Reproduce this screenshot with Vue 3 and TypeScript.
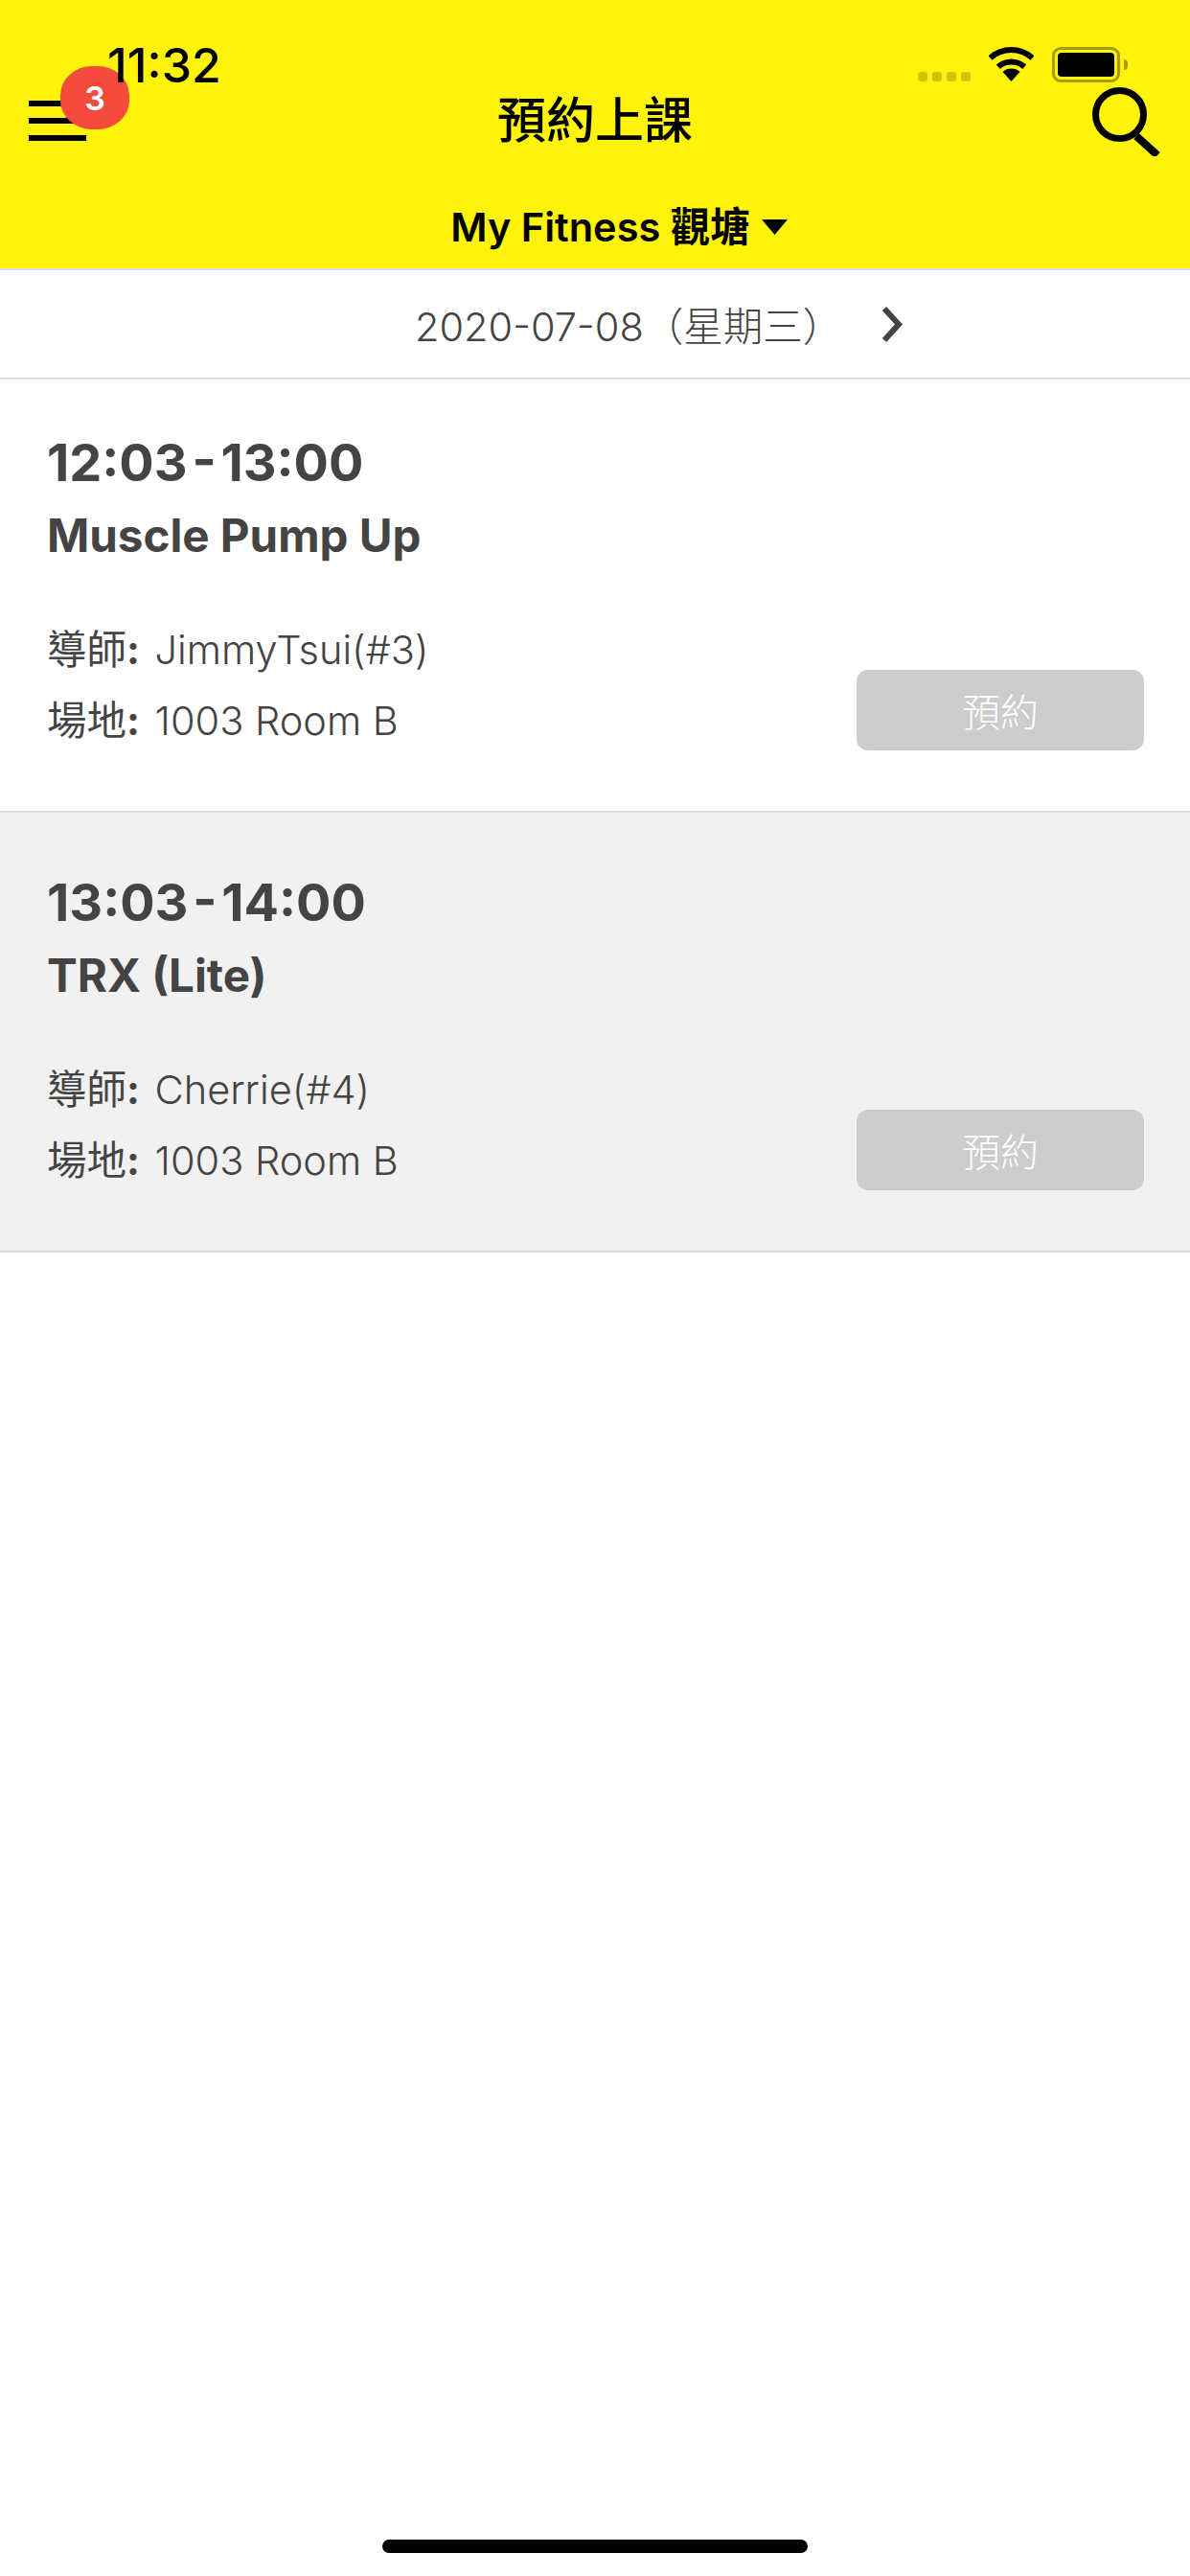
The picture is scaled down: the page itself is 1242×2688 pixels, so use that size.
<script setup lang="ts">
interface Lesson { time: string; name: string; coach: string; room: string; shaded: boolean }
const lessons: Lesson[] = [
  { time: '12:03 - 13:00', name: 'Muscle Pump Up', coach: 'JimmyTsui(#3)', room: '1003 Room B', shaded: false },
  { time: '13:03 - 14:00', name: 'TRX (Lite)', coach: 'Cherrie(#4)', room: '1003 Room B', shaded: true },
]
</script>

<template>
  <div class="page">
    <header class="nav">
      <div class="nav-top">
        <div class="menu">
          <span class="bar"></span><span class="bar"></span><span class="bar"></span>
          <span class="badge">3</span>
        </div>
        <h1 class="title">預約上課</h1>
        <svg class="search" width="72" height="72" viewBox="0 0 72 72">
          <circle cx="28.5" cy="28.5" r="25" fill="none" stroke="#000" stroke-width="7" />
          <path d="M46 51 L68 71" fill="none" stroke="#000" stroke-width="8" />
        </svg>
      </div>
      <div class="branch">
        <span>My Fitness 觀塘</span>
        <svg width="27" height="16" viewBox="0 0 27 16"><path d="M0 0 H27 L13.5 16 Z" fill="#000" /></svg>
      </div>
    </header>

    <div class="date-row">
      <span class="date">2020-07-08（星期三）</span>
      <svg class="chev" width="22" height="37" viewBox="0 0 22 37">
        <path d="M3 2 L18 18.5 L3 35" fill="none" stroke="#444" stroke-width="6" />
      </svg>
    </div>

    <article v-for="l in lessons" :key="l.time" class="card" :class="{ shaded: l.shaded }">
      <div class="time">{{ l.time }}</div>
      <div class="name">{{ l.name }}</div>
      <div class="foot">
        <div class="info">
          <div class="line"><span class="label">導師<b>:</b></span> {{ l.coach }}</div>
          <div class="line"><span class="label">場地<b>:</b></span> {{ l.room }}</div>
        </div>
        <button class="book" type="button">預約</button>
      </div>
    </article>

    <div class="status">
      <span class="clock">11:32</span>
      <div class="status-icons">
        <span class="dots"><i></i><i></i><i></i><i></i></span>
        <svg class="wifi" width="47" height="36" viewBox="0 0 47 36">
          <path d="M1.5 11.5 A33 33 0 0 1 45.5 11.5" fill="none" stroke="#000" stroke-width="6" />
          <path d="M9.8 20.8 A20.5 20.5 0 0 1 37.2 20.8" fill="none" stroke="#000" stroke-width="6" />
          <path d="M23.5 36 L14.5 26 A13.45 13.45 0 0 1 32.5 26 Z" fill="#000" />
        </svg>
        <span class="battery"><span class="cell"></span></span>
        <span class="cap"></span>
      </div>
    </div>
    <div class="home"></div>
  </div>
</template>

<style>
html, body { margin: 0; background: #fff; }
</style>

<style scoped>
.page {
  position: relative;
  width: 1242px;
  height: 2688px;
  overflow: hidden;
  background: #fff;
  color: #444;
  font-family: Inter, "Noto Sans CJK TC", sans-serif;
}
.nav {
  background: #fff30b;
  height: 280px;
  box-sizing: border-box;
  padding-top: 88px;
  color: #000;
  display: flex;
  flex-direction: column;
}
.nav-top {
  display: flex;
  align-items: center;
  justify-content: space-between;
  height: 76px;
  padding: 0 30px;
}
.menu {
  position: relative;
  width: 60px;
  height: 42px;
  display: flex;
  flex-direction: column;
  justify-content: space-between;
}
.bar { display: block; height: 6px; background: #000; }
.badge {
  position: absolute;
  left: 33px;
  top: -36px;
  width: 72px;
  height: 66px;
  border-radius: 46%;
  background: #f44b3f;
  color: #fff;
  font-size: 34px;
  font-weight: 600;
  display: flex;
  align-items: center;
  justify-content: center;
}
.title {
  margin: 0;
  font-size: 51px;
  font-weight: 500;
  line-height: 78px;
  position: absolute;
  left: 0;
  right: 0;
  text-align: center;
  pointer-events: none;
}
.search { display: block; margin-top: 2px; }
.branch {
  margin-top: 45px;
  padding-left: 50px;
  display: flex;
  justify-content: center;
  align-items: center;
  gap: 12px;
  font-size: 41.5px;
  font-weight: 600;
  line-height: 56px;
}
.date-row {
  border-top: 2px solid #ddd;
  border-bottom: 2px solid #ddd;
  height: 112px;
  display: flex;
  align-items: center;
  gap: 41px;
  padding-left: 433px;
}
.date { font-size: 41.5px; font-weight: 300; }
.chev { display: block; }
.card {
  height: 457px;
  border-bottom: 2px solid #ddd;
  padding: 0 48px 0 49px;
  display: flex;
  flex-direction: column;
}
.card:not(.shaded) { height: 450px; }
.shaded { background: #f1f1f1; }
.time {
  margin-top: 54px;
  font-size: 54px;
  line-height: 66px;
  font-weight: 700;
  word-spacing: -8px;
}
.shaded .time { margin-top: 61px; }
.name {
  margin-top: 12px;
  font-size: 47.5px;
  line-height: 62px;
  font-weight: 700;
}
.foot {
  margin-top: 51px;
  display: flex;
  justify-content: space-between;
  align-items: flex-end;
}
.line {
  font-size: 41.5px;
  line-height: 74px;
  font-weight: 300;
}
.label { font-weight: 400; margin-right: 4px; }
.label b { font-weight: 700; }
.book {
  width: 300px;
  height: 84px;
  margin: 0 0 6px;
  border: 0;
  border-radius: 12px;
  background: #ccc;
  color: #fff;
  font: 300 40px Inter, "Noto Sans CJK TC", sans-serif;
}
.status {
  position: absolute;
  left: 0;
  right: 0;
  top: 0;
  height: 110px;
  color: #000;
}
.clock {
  position: absolute;
  left: 112px;
  top: 40px;
  font-size: 50px;
  line-height: 56px;
  font-weight: 500;
}
.status-icons {
  position: absolute;
  left: 958px;
  top: 49px;
  display: flex;
  align-items: flex-start;
}
.dots { display: flex; gap: 5px; margin-top: 26px; margin-right: 19px; }
.dots i { display: block; width: 10px; height: 10px; border-radius: 3px; background: #cfc400; }
.wifi { display: block; }
.battery {
  box-sizing: border-box;
  width: 71px;
  height: 37px;
  margin-left: 19px;
  border: 3px solid #a39b00;
  border-radius: 9px;
  padding: 3px;
  display: block;
}
.cell { display: block; height: 100%; background: #000; border-radius: 4px; }
.cap { width: 4px; height: 11px; margin: 13px 0 0 4px; background: #a39b00; border-radius: 0 4px 4px 0; }
.home {
  position: absolute;
  left: 399px;
  bottom: 24px;
  width: 444px;
  height: 14px;
  border-radius: 7px;
  background: #000;
}
</style>
